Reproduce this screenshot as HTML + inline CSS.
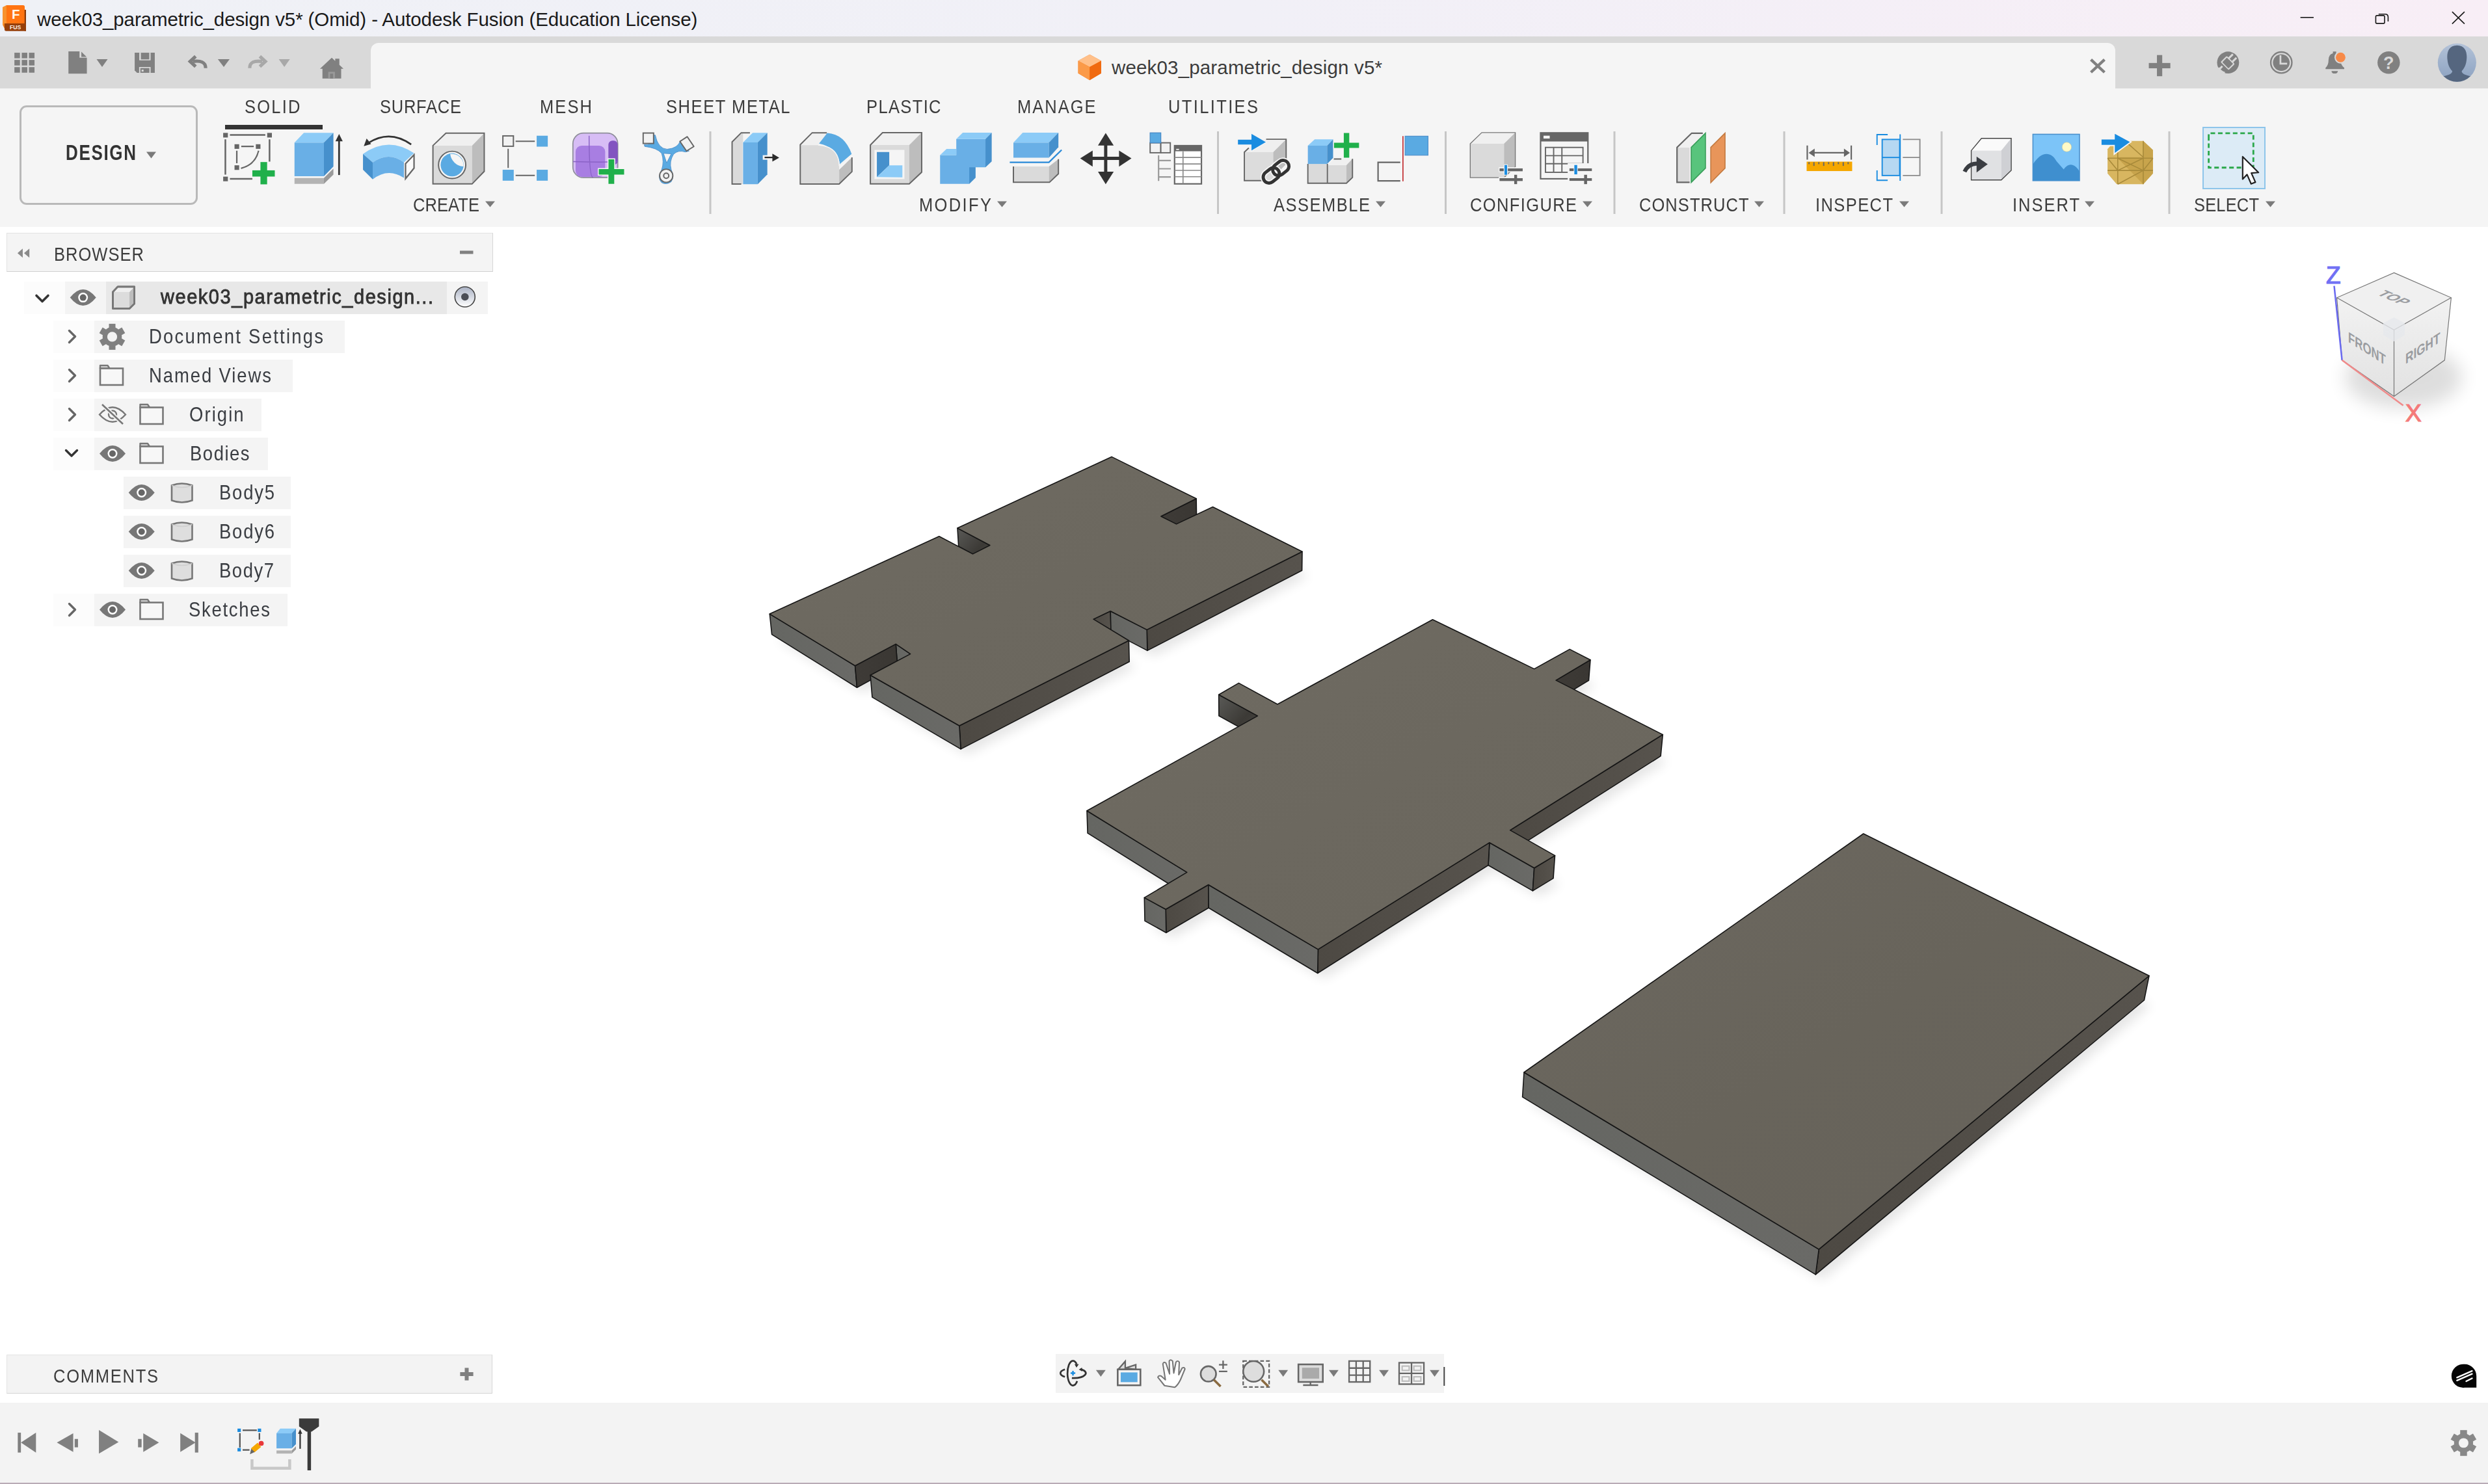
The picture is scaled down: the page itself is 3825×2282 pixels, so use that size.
<!DOCTYPE html>
<html><head><meta charset="utf-8"><title>Fusion</title>
<style>
html,body{margin:0;padding:0;width:3825px;height:2282px;overflow:hidden;background:#fff;font-family:'Liberation Sans', sans-serif;}
.a{position:absolute;}
.t{position:absolute;white-space:pre;line-height:1;font-family:'Liberation Sans', sans-serif;}
</style></head><body>
<div class="a" style="left:0;top:0;width:3825px;height:56px;background:linear-gradient(90deg,#eff1f6 0%,#f1f0f7 50%,#f8eef6 100%)"></div>
<div class="a" style="left:0;top:56px;width:3825px;height:80px;background:#d9d9d9"></div>
<div class="a" style="left:570px;top:66px;width:2682px;height:70px;background:#f5f5f5;border-radius:12px 12px 0 0"></div>
<div class="a" style="left:0;top:136px;width:3825px;height:213px;background:#f5f5f5"></div>
<div class="a" style="left:29.5px;top:162px;width:268px;height:146.5px;border:3px solid #b9b9b9;border-radius:11px"></div>
<div class="a" style="left:346px;top:192px;width:150px;height:7px;background:#333"></div>
<div class="a" style="left:3386px;top:195px;width:93px;height:92px;background:#dcebf6;border:2.5px solid #8ec5ea"></div>
<!-- browser -->
<div class="a" style="left:10px;top:358px;width:746px;height:58px;background:#f4f4f4;border:1.5px solid #e2e2e2;border-right-color:#d6d6d6;border-bottom-color:#d0d0d0"></div>
<!-- comments -->
<div class="a" style="left:10px;top:2083px;width:745px;height:58px;background:#f3f3f3;border:1.5px solid #e4e4e4;border-right-color:#d6d6d6;border-bottom-color:#d3d3d3"></div>
<!-- nav bar -->
<div class="a" style="left:1623px;top:2082px;width:597px;height:60px;background:#f3f3f3"></div>
<!-- timeline -->
<div class="a" style="left:0;top:2157px;width:3825px;height:123px;background:#f3f3f3"></div>
<div class="a" style="left:0;top:2280px;width:3825px;height:2px;background:#b9abb6"></div>
<div class="a" style="left:37px;top:433px;width:713px;height:50px;background:#fcfcfc"></div>
<div class="a" style="left:100px;top:433px;width:650px;height:50px;background:#f4f4f4"></div>
<div class="a" style="left:163px;top:433px;width:524px;height:50px;background:#e8e8e8"></div>
<div class="a" style="left:82px;top:493px;width:448px;height:50px;background:#fcfcfc"></div>
<div class="a" style="left:145px;top:493px;width:385px;height:50px;background:#f4f4f4"></div>
<div class="a" style="left:82px;top:553px;width:368px;height:50px;background:#fcfcfc"></div>
<div class="a" style="left:145px;top:553px;width:305px;height:50px;background:#f4f4f4"></div>
<div class="a" style="left:82px;top:613px;width:320px;height:50px;background:#fcfcfc"></div>
<div class="a" style="left:145px;top:613px;width:257px;height:50px;background:#f4f4f4"></div>
<div class="a" style="left:82px;top:673px;width:330px;height:50px;background:#fcfcfc"></div>
<div class="a" style="left:145px;top:673px;width:267px;height:50px;background:#f4f4f4"></div>
<div class="a" style="left:190px;top:733px;width:257px;height:50px;background:#f4f4f4"></div>
<div class="a" style="left:190px;top:793px;width:257px;height:50px;background:#f4f4f4"></div>
<div class="a" style="left:190px;top:853px;width:257px;height:50px;background:#f4f4f4"></div>
<div class="a" style="left:82px;top:913px;width:360px;height:50px;background:#fcfcfc"></div>
<div class="a" style="left:145px;top:913px;width:297px;height:50px;background:#f4f4f4"></div>
<svg width="3825" height="2282" viewBox="0 0 3825 2282" style="position:absolute;left:0;top:0">
<defs>
<linearGradient id="gt_b1" x1="0" y1="0" x2="1" y2="1"><stop offset="0" stop-color="#6f6b62"/><stop offset="0.5" stop-color="#6c685f"/><stop offset="1" stop-color="#6a665d"/></linearGradient>
<linearGradient id="gt_b2" x1="0" y1="0" x2="1" y2="1"><stop offset="0" stop-color="#6f6b62"/><stop offset="0.5" stop-color="#6c685f"/><stop offset="1" stop-color="#6a665d"/></linearGradient>
<linearGradient id="gt_b3" x1="0" y1="0" x2="1" y2="1"><stop offset="0" stop-color="#6c6860"/><stop offset="0.5" stop-color="#68645b"/><stop offset="1" stop-color="#66625b"/></linearGradient>
<linearGradient id="gl" x1="0" y1="0" x2="1" y2="0"><stop offset="0" stop-color="#656662"/><stop offset="1" stop-color="#6a6a67"/></linearGradient>
<linearGradient id="gd" x1="0" y1="0" x2="1" y2="0"><stop offset="0" stop-color="#4d4943"/><stop offset="1" stop-color="#57534d"/></linearGradient>
<linearGradient id="occ" x1="0" y1="0" x2="1" y2="1"><stop offset="0" stop-color="#5a5a57"/><stop offset="0.6" stop-color="#3c3a36"/><stop offset="1" stop-color="#4a4844"/></linearGradient>
<linearGradient id="occ2" x1="0" y1="0" x2="1" y2="0"><stop offset="0" stop-color="#3e3b37"/><stop offset="1" stop-color="#3a3733"/></linearGradient>
<filter id="sh" x="-10%" y="-10%" width="120%" height="120%"><feGaussianBlur stdDeviation="9"/></filter>
</defs>
<polygon points="1196.6,983.6 1455.7,861.1 1507.2,888.9 1533.5,875.2 1483.7,848.1 1719.7,735.6 1849.5,801.7 1795.4,829.5 1818.8,841.8 1874.7,814.7 2011.6,885.2 1773.9,1008.4 1718.0,979.1 1692.1,991.7 1746.2,1025.5 1487.1,1159.9 1350.9,1080.1 1412.0,1046.7 1389.7,1031.1 1327.5,1065.2" fill="#000" opacity="0.10" filter="url(#sh)"/>
<polygon points="1839.2,766.8 1784.9,794.0 1785.4,821.5 1839.5,793.7" fill="url(#occ2)" stroke="#161616" stroke-width="1.6" stroke-linejoin="round"/>
<polygon points="1521.9,838.5 1472.0,812.1 1473.7,840.1 1523.5,867.2" fill="url(#occ)" stroke="#161616" stroke-width="1.6" stroke-linejoin="round"/>
<polygon points="2002.0,848.2 1763.2,968.4 1763.9,1000.4 2001.6,877.2" fill="url(#gd)" stroke="#161616" stroke-width="1.6" stroke-linejoin="round"/>
<polygon points="1707.2,939.8 1681.1,952.1 1682.1,983.7 1708.0,971.1" fill="url(#gd)" stroke="#161616" stroke-width="1.6" stroke-linejoin="round"/>
<polygon points="1763.2,968.4 1707.2,939.8 1708.0,971.1 1763.9,1000.4" fill="url(#gl)" stroke="#161616" stroke-width="1.6" stroke-linejoin="round"/>
<polygon points="1314.6,1023.7 1183.3,944.1 1186.6,975.6 1317.5,1057.2" fill="url(#gl)" stroke="#161616" stroke-width="1.6" stroke-linejoin="round"/>
<polygon points="1399.6,1005.6 1377.2,990.4 1379.7,1023.1 1402.0,1038.7" fill="url(#gl)" stroke="#161616" stroke-width="1.6" stroke-linejoin="round"/>
<polygon points="1377.2,990.4 1314.6,1023.7 1317.5,1057.2 1379.7,1023.1" fill="url(#occ2)" stroke="#161616" stroke-width="1.6" stroke-linejoin="round"/>
<polygon points="1735.4,985.0 1474.9,1116.0 1477.1,1151.9 1736.2,1017.5" fill="url(#gd)" stroke="#161616" stroke-width="1.6" stroke-linejoin="round"/>
<polygon points="1474.9,1116.0 1338.1,1038.2 1340.9,1072.1 1477.1,1151.9" fill="url(#gl)" stroke="#161616" stroke-width="1.6" stroke-linejoin="round"/>
<polygon points="1183.3,944.1 1443.8,824.7 1495.5,851.9 1521.9,838.5 1472.0,812.1 1709.0,702.4 1839.2,766.8 1784.9,794.0 1808.5,805.9 1864.5,779.5 2002.0,848.2 1763.2,968.4 1707.2,939.8 1681.1,952.1 1735.4,985.0 1474.9,1116.0 1338.1,1038.2 1399.6,1005.6 1377.2,990.4 1314.6,1023.7" fill="url(#gt_b1)" stroke="#161616" stroke-width="1.6" stroke-linejoin="round"/>
<polygon points="1682.1,1289.1 1943.2,1141.6 1883.9,1108.7 1914.3,1090.6 1973.7,1123.6 2211.1,991.7 2366.6,1068.5 2420.8,1038.0 2452.5,1054.4 2399.8,1086.2 2563.1,1170.6 2329.6,1319.3 2398.0,1358.6 2366.4,1377.9 2298.0,1338.5 2035.7,1504.5 1868.1,1404.0 1802.8,1442.2 1770.0,1424.1 1835.2,1384.8" fill="#000" opacity="0.10" filter="url(#sh)"/>
<polygon points="2445.0,1014.7 2392.1,1046.1 2389.8,1078.2 2442.5,1046.4" fill="url(#occ2)" stroke="#161616" stroke-width="1.6" stroke-linejoin="round"/>
<polygon points="1933.4,1100.9 1873.7,1068.3 1873.9,1100.7 1933.2,1133.6" fill="url(#occ)" stroke="#161616" stroke-width="1.6" stroke-linejoin="round"/>
<polygon points="2556.3,1129.6 2321.7,1276.6 2319.6,1311.3 2553.1,1162.6" fill="url(#gd)" stroke="#161616" stroke-width="1.6" stroke-linejoin="round"/>
<polygon points="1824.8,1341.4 1671.0,1246.8 1672.1,1281.1 1825.2,1376.8" fill="url(#gl)" stroke="#161616" stroke-width="1.6" stroke-linejoin="round"/>
<polygon points="2358.7,1334.7 2289.9,1295.7 2288.0,1330.5 2356.4,1369.9" fill="url(#gl)" stroke="#161616" stroke-width="1.6" stroke-linejoin="round"/>
<polygon points="2390.5,1315.6 2358.7,1334.7 2356.4,1369.9 2388.0,1350.6" fill="url(#gd)" stroke="#161616" stroke-width="1.6" stroke-linejoin="round"/>
<polygon points="2289.9,1295.7 2026.4,1459.9 2025.7,1496.5 2288.0,1330.5" fill="url(#gd)" stroke="#161616" stroke-width="1.6" stroke-linejoin="round"/>
<polygon points="1857.8,1360.5 1792.2,1398.3 1792.8,1434.2 1858.1,1396.0" fill="url(#gd)" stroke="#161616" stroke-width="1.6" stroke-linejoin="round"/>
<polygon points="1792.2,1398.3 1759.3,1380.4 1760.0,1416.1 1792.8,1434.2" fill="url(#gl)" stroke="#161616" stroke-width="1.6" stroke-linejoin="round"/>
<polygon points="2026.4,1459.9 1857.8,1360.5 1858.1,1396.0 2025.7,1496.5" fill="url(#gl)" stroke="#161616" stroke-width="1.6" stroke-linejoin="round"/>
<polygon points="1671.0,1246.8 1933.4,1100.9 1873.7,1068.3 1904.4,1050.4 1964.0,1083.0 2202.5,952.7 2358.7,1028.6 2413.2,998.4 2445.0,1014.7 2392.1,1046.1 2556.3,1129.6 2321.7,1276.6 2390.5,1315.6 2358.7,1334.7 2289.9,1295.7 2026.4,1459.9 1857.8,1360.5 1792.2,1398.3 1759.3,1380.4 1824.8,1341.4" fill="url(#gt_b2)" stroke="#161616" stroke-width="1.6" stroke-linejoin="round"/>
<polygon points="2350.6,1694.9 2869.6,1326.8 3306.4,1546.0 2801.3,1967.9" fill="#000" opacity="0.10" filter="url(#sh)"/>
<polygon points="3304.0,1500.5 2796.3,1921.1 2791.3,1959.9 3296.4,1538.0" fill="url(#gd)" stroke="#161616" stroke-width="1.6" stroke-linejoin="round"/>
<polygon points="2796.3,1921.1 2343.0,1649.0 2340.6,1686.9 2791.3,1959.9" fill="url(#gl)" stroke="#161616" stroke-width="1.6" stroke-linejoin="round"/>
<polygon points="2343.0,1649.0 2864.8,1282.0 3304.0,1500.5 2796.3,1921.1" fill="url(#gt_b3)" stroke="#161616" stroke-width="1.6" stroke-linejoin="round"/>
</svg>
<svg width="3825" height="2282" viewBox="0 0 3825 2282" style="position:absolute;left:0;top:0"><path d="M4,11 L10,8 L10,36 L4,38 Z" fill="#f8922e"/><path d="M10,8 L35.5,8 Q38,8 38,10.5 L38,36 L10,36 Z" fill="#ff7412"/><path d="M37.7,15 L40,15 L40,47.7 L37.7,47.7 Z" fill="#8a3a08"/><path d="M7,36 L40,36 L40,47.7 L9.5,47.7 Q7,47.7 7,45.2 Z" fill="#963f0a"/><path d="M4,38 L7,36 L7,44 Z" fill="#f0801a"/><text x="24.3" y="29.4" font-family="Liberation Sans" font-weight="bold" font-size="20.5" fill="#fff8ec" text-anchor="middle">F</text><text x="23.7" y="44.6" font-family="Liberation Sans" font-weight="bold" font-size="8.6" fill="#fff2e6" text-anchor="middle">FUS</text><g transform="translate(3150 0) scale(0.271297)"><line x1="1425" y1="99" x2="1500" y2="99" stroke="#1a1a1a" stroke-width="6"/><rect x="1852" y="88" width="50" height="45" rx="7" fill="none" stroke="#1a1a1a" stroke-width="6"/><path d="M1868,80 L1905,80 Q1922,80 1922,97 L1922,122" fill="none" stroke="#1a1a1a" stroke-width="6"/><path d="M2285,67 L2355,135 M2355,67 L2285,135" stroke="#1a1a1a" stroke-width="6"/></g><g transform="translate(10 70) scale(0.213038)"><rect x="57" y="52" width="40" height="40" fill="#808080"/><rect x="57" y="104" width="40" height="40" fill="#808080"/><rect x="57" y="156" width="40" height="40" fill="#808080"/><rect x="110" y="52" width="40" height="40" fill="#808080"/><rect x="110" y="104" width="40" height="40" fill="#808080"/><rect x="110" y="156" width="40" height="40" fill="#808080"/><rect x="162" y="52" width="40" height="40" fill="#808080"/><rect x="162" y="104" width="40" height="40" fill="#808080"/><rect x="162" y="156" width="40" height="40" fill="#808080"/><path d="M447,42 L527,42 L527,88 L580,88 L580,203 L447,203 Z" fill="#808080"/><path d="M540,45 L578,82 L540,82 Z" fill="#808080"/><polygon points="650,98 730,98 690,155" fill="#808080" /><path d="M925,52 L1070,52 L1070,197 L942,197 L925,180 Z" fill="#808080"/><rect x="958" y="52" width="82" height="55" fill="#d9d9d9"/><rect x="970" y="52" width="60" height="48" fill="#808080"/><rect x="957" y="155" width="83" height="42" fill="#d9d9d9"/><rect x="966" y="163" width="65" height="34" fill="#808080"/><rect x="975" y="174" width="14" height="14" fill="#d9d9d9"/><path d="M1437,163 C1437,118 1400,108 1345,115" fill="none" stroke="#808080" stroke-width="24"/><path d="M1365,78 L1325,115 L1365,152" fill="none" stroke="#808080" stroke-width="24"/><polygon points="1525,98 1610,98 1568,155" fill="#808080" /><path d="M1755,163 C1755,118 1790,108 1845,115" fill="none" stroke="#a8a8a8" stroke-width="24"/><path d="M1828,78 L1868,115 L1828,152" fill="none" stroke="#a8a8a8" stroke-width="24"/><polygon points="1965,98 2045,98 2005,155" fill="#a8a8a8" /><path d="M2262,168 L2347,88 L2372,112 L2372,95 L2402,95 L2402,140 L2432,168 L2415,168 L2415,238 L2280,238 L2280,168 Z" fill="#808080"/><rect x="2322" y="190" width="48" height="48" fill="#9a9a9a"/><rect x="2335" y="203" width="22" height="35" fill="#808080"/></g><g transform="translate(1500 50) scale(0.321543)"><polygon points="545,105 600,135 600,195 545,228 490,195 490,135" fill="#f57a1e"/><polygon points="545,105 600,135 545,165 490,135" fill="#ffc08a"/><polygon points="490,135 545,165 545,228 490,195" fill="#fb9a48"/><polygon points="545,165 600,135 600,195 545,228" fill="#f06a10"/></g><g transform="translate(3150 0) scale(0.271297)"><path d="M238,338 L315,410 M315,338 L238,410" stroke="#808080" stroke-width="16"/><rect x="612" y="312" width="30" height="120" fill="#808080"/><rect x="566" y="357" width="122" height="30" fill="#808080"/></g><g transform="translate(3395 65) scale(0.168805)"><circle cx="180" cy="185" r="100" fill="#808080"/><path d="M92,232 A100,100 0 0 0 150,280" stroke="#d9d9d9" stroke-width="18" fill="none"/><path d="M88,258 L128,218" stroke="#d9d9d9" stroke-width="18"/><g transform="rotate(45 180 185)"><rect x="128" y="150" width="104" height="80" rx="10" fill="#d9d9d9"/><rect x="140" y="160" width="80" height="60" rx="6" fill="#808080"/><rect x="148" y="100" width="18" height="60" fill="#d9d9d9"/><rect x="194" y="100" width="18" height="60" fill="#d9d9d9"/></g><circle cx="665" cy="185" r="96" fill="none" stroke="#808080" stroke-width="14"/><circle cx="665" cy="185" r="76" fill="#808080"/><path d="M657,118 L657,195 L718,195" fill="none" stroke="#d9d9d9" stroke-width="16"/><path d="M1068,245 L1238,245 L1238,232 Q1205,210 1205,160 Q1205,110 1165,100 L1165,85 L1135,85 L1135,100 Q1095,110 1095,160 Q1095,210 1068,232 Z" fill="#808080"/><path d="M1122,262 L1180,262 Q1178,285 1150,285 Q1124,285 1122,262 Z" fill="#808080"/><circle cx="1205" cy="138" r="56" fill="#d9d9d9"/><circle cx="1205" cy="138" r="44" fill="#f78a48"/><circle cx="1643" cy="185" r="102" fill="#808080"/><text x="1643" y="245" font-family="Liberation Sans" font-weight="bold" font-size="160" fill="#d9d9d9" text-anchor="middle">?</text><defs><linearGradient id="avg" x1="0" y1="0" x2="0" y2="1"><stop offset="0" stop-color="#b3c2d8"/><stop offset="1" stop-color="#8ba1c0"/></linearGradient></defs><clipPath id="avc"><circle cx="2265" cy="185" r="175"/></clipPath><circle cx="2265" cy="185" r="175" fill="url(#avg)"/><path clip-path="url(#avc)" d="M2265,28 C2185,28 2170,100 2178,160 C2182,200 2195,235 2222,262 C2222,290 2180,300 2140,310 C2110,318 2095,330 2090,340 A175,175 0 0 0 2440,340 C2435,330 2420,318 2390,310 C2350,300 2308,290 2308,262 C2335,235 2348,200 2352,160 C2360,100 2345,28 2265,28 Z" fill="#55667f"/></g><rect x="1090.5" y="202" width="3" height="127" fill="#c6c6c6"/><rect x="1871.0" y="202" width="3" height="127" fill="#c6c6c6"/><rect x="2221.0" y="202" width="3" height="127" fill="#c6c6c6"/><rect x="2480.5" y="202" width="3" height="127" fill="#c6c6c6"/><rect x="2741.5" y="202" width="3" height="127" fill="#c6c6c6"/><rect x="2983.5" y="202" width="3" height="127" fill="#c6c6c6"/><rect x="3333.5" y="202" width="3" height="127" fill="#c6c6c6"/><polygon points="746,309.5 761,309.5 753.5,318.5" fill="#7a7a7a"/><polygon points="1533,309.5 1548,309.5 1540.5,318.5" fill="#7a7a7a"/><polygon points="2115,309.5 2130,309.5 2122.5,318.5" fill="#7a7a7a"/><polygon points="2433,309.5 2448,309.5 2440.5,318.5" fill="#7a7a7a"/><polygon points="2697,309.5 2712,309.5 2704.5,318.5" fill="#7a7a7a"/><polygon points="2920,309.5 2935,309.5 2927.5,318.5" fill="#7a7a7a"/><polygon points="3205,309.5 3220,309.5 3212.5,318.5" fill="#7a7a7a"/><polygon points="3483,309.5 3498,309.5 3490.5,318.5" fill="#7a7a7a"/><polygon points="225,233.5 240,233.5 232.5,243.5" fill="#7a7a7a"/><g transform="translate(340 195) scale(0.124595)"><rect x="25" y="75" width="58" height="57" fill="#666666"/><rect x="568" y="75" width="58" height="57" fill="#666666"/><rect x="25" y="615" width="58" height="57" fill="#666666"/><path d="M108,100 L545,100 M52,155 L52,590 M597,155 L597,430 M108,643 L385,643" stroke="#666666" stroke-width="20"/><rect x="165" y="215" width="57" height="57" fill="#666666"/><rect x="428" y="215" width="57" height="57" fill="#666666"/><rect x="165" y="475" width="57" height="57" fill="#666666"/><path d="M248,242 L402,242 M193,295 L193,450 M462,295 Q420,470 245,512" fill="none" stroke="#666666" stroke-width="18"/><rect x="485" y="435" width="82" height="275" fill="#20b04b"/><rect x="385" y="537" width="277" height="77" fill="#20b04b"/><polygon points="905,195 1268,195 1268,610 905,610" fill="#69afe6" /><polygon points="905,195 1020,75 1385,75 1268,195" fill="#8ccbf7" /><polygon points="1268,195 1385,75 1385,490 1268,610" fill="#4690cc" /><polygon points="905,632 1268,632 1268,705 905,705" fill="#b3b3b3" /><polygon points="1268,632 1385,515 1385,590 1268,705" fill="#9a9a9a" /><path d="M1455,165 L1455,595" stroke="#333" stroke-width="22"/><polygon points="1410,178 1455,88 1500,178" fill="#333" /><path d="M2345,218 Q2080,30 1815,200" fill="none" stroke="#333" stroke-width="22"/><polygon points="1760,238 1795,145 1850,212" fill="#333" /><path d="M1750,335 Q2060,110 2380,325 L2255,440 Q2070,300 1870,440 Z" fill="#8ccbf7"/><path d="M1870,440 Q2070,300 2255,440 L2255,630 Q2060,500 1870,648 Z" fill="#69afe6"/><polygon points="1750,335 1870,440 1870,648 1750,530" fill="#4690cc" /><polygon points="2275,455 2380,345 2380,510 2275,640" fill="#fafafa" stroke="#666666" stroke-width="18"/></g><g transform="translate(655 195) scale(0.124595)"><polygon points="85,232 568,232 568,705 85,705" fill="#dadada" /><polygon points="85,232 245,78 718,78 568,232" fill="#f0f0f0" /><polygon points="568,232 718,78 718,550 568,705" fill="#bdbdbd" /><polygon points="85,232 245,78 718,78 718,550 568,705 85,705" fill="none" stroke="#666666" stroke-width="16"/><circle cx="322" cy="470" r="168" fill="#f5f5f5" stroke="#666666" stroke-width="16"/><circle cx="322" cy="470" r="142" fill="#5aaae2"/><path d="M298,336 A142,142 0 0 1 462,490 A175,175 0 0 1 298,336 Z" fill="#f5f5f5"/><rect x="948" y="112" width="130" height="128" fill="#f2f2f2" stroke="#666666" stroke-width="16"/><rect x="1365" y="110" width="137" height="135" fill="#5aaae2"/><rect x="945" y="530" width="137" height="135" fill="#5aaae2"/><rect x="1365" y="530" width="137" height="135" fill="#5aaae2"/><path d="M1105,178 L1342,178 M1013,270 L1013,508 M1105,600 L1342,600" stroke="#666666" stroke-width="16"/><rect x="1812" y="78" width="553" height="550" rx="130" fill="#d7bdf5" stroke="#8e8e9a" stroke-width="14"/><rect x="2250" y="170" width="115" height="300" rx="50" fill="#8254c0"/><rect x="1845" y="232" width="365" height="385" rx="75" fill="#a87ee2"/><path d="M2012,110 Q2012,620 2060,625 M1815,430 Q2200,440 2365,430" fill="none" stroke="#8a62c6" stroke-width="12"/><path d="M2245,395 L2328,395 L2328,515 L2450,515 L2450,595 L2328,595 L2328,710 L2245,710 L2245,595 L2125,595 L2125,515 L2245,515 Z" fill="#20b04b" stroke="#f5f5f5" stroke-width="12"/></g><g transform="translate(975 195) scale(0.140667)"><path d="M110,195 Q250,200 340,250 Q450,255 520,195 M340,250 L355,540 M340,250 Q420,300 355,540" fill="none" stroke="#5aaae2" stroke-width="0"/><path d="M215,90 Q205,205 110,195 L115,215 Q250,230 300,290 Q330,380 300,470 Q250,560 300,610 Q350,640 405,600 Q440,540 405,470 Q380,380 430,300 Q480,250 560,275 L600,265 Q520,240 505,150 Q480,235 360,245 Q260,240 230,90 Z" fill="#5aaae2" stroke="#4a8cc8" stroke-width="6"/><polygon points="320,290 405,295 355,395" fill="#f5f5f5" stroke="#4a8cc8" stroke-width="6"/><rect x="98" y="68" width="114" height="114" fill="#f2f2f2" stroke="#666666" stroke-width="14"/><polygon points="500,160 580,108 652,215 572,265" fill="#f2f2f2" stroke="#666666" stroke-width="14" stroke-linejoin="round"/><circle cx="350" cy="535" r="72" fill="#f2f2f2" stroke="#666666" stroke-width="14"/><circle cx="350" cy="535" r="28" fill="none" stroke="#666666" stroke-width="14"/><polygon points="1070,165 1170,65 1190,65 1190,625 1070,625" fill="#dadada" /><path d="M1170,625 L1070,625 L1070,165 L1170,65 L1265,65" fill="none" stroke="#666666" stroke-width="14"/><polygon points="1190,170 1350,170 1350,628 1190,628" fill="#69afe6" stroke="#f5f5f5" stroke-width="10"/><polygon points="1190,170 1295,65 1455,65 1350,170" fill="#8ccbf7" /><polygon points="1350,170 1455,65 1455,520 1350,628" fill="#4690cc" /><polygon points="1190,170 1350,170 1350,628 1190,628" fill="#69afe6" /><rect x="1405" y="310" width="55" height="50" fill="#f5f5f5"/><path d="M1425,335 L1525,335" stroke="#2a2a2a" stroke-width="16"/><polygon points="1510,293 1585,337 1510,380" fill="#2a2a2a" /><polygon points="1815,200 1945,65 2110,65 2020,185 2010,200" fill="#f0f0f0" /><path d="M2020,183 L2110,68 Q2300,80 2378,300 L2248,418 Q2235,230 2020,183 Z" fill="#5aaae2"/><path d="M1815,200 L2010,200 Q2235,215 2240,420 L2240,625 L1815,625 Z" fill="#dadada"/><polygon points="2240,470 2380,335 2380,490 2240,625" fill="#bdbdbd" /><path d="M2010,200 Q2235,215 2240,420 L2380,300" fill="none" stroke="#f5f5f5" stroke-width="10"/><path d="M2105,65 L1945,65 L1815,195 L1815,625 L2240,625 L2380,490 L2380,335" fill="none" stroke="#666666" stroke-width="14"/></g><g transform="translate(1330 195) scale(0.124595)"><polygon points="65,225 545,225 545,705 65,705" fill="#dadada" /><polygon points="65,225 215,72 698,72 545,225" fill="#f0f0f0" /><polygon points="545,225 698,72 698,560 545,705" fill="#bdbdbd" /><polygon points="65,225 215,72 698,72 698,560 545,705 65,705" fill="none" stroke="#666666" stroke-width="16"/><rect x="115" y="285" width="370" height="360" fill="#f5f5f5"/><polygon points="145,312 298,312 298,475 145,620" fill="#4690cc" /><polygon points="145,620 298,475 460,475 460,625" fill="#8ccbf7" /><polygon points="925,350 1125,350 1125,150 1485,150 1485,500 1362,500 1362,628 1285,705 925,705" fill="#69afe6" /><polygon points="925,350 1005,272 1125,272 1125,350" fill="#8ccbf7" /><polygon points="1125,150 1205,72 1562,72 1485,150" fill="#8ccbf7" /><polygon points="1485,150 1562,72 1562,428 1485,500" fill="#4690cc" /><polygon points="1285,500 1362,500 1362,628 1285,705" fill="#4690cc" /><polygon points="1830,195 2268,195 2268,382 1830,382" fill="#69afe6" /><polygon points="1830,195 1945,72 2385,72 2268,195" fill="#8ccbf7" /><polygon points="2268,195 2385,72 2385,250 2268,382" fill="#4690cc" /><polygon points="1830,490 2268,490 2268,685 1830,685" fill="#dadada" /><polygon points="2268,490 2385,400 2385,580 2268,685" fill="#bdbdbd" /><path d="M1830,490 L1830,685 L2275,685 L2385,580 L2385,400" fill="none" stroke="#666666" stroke-width="16"/><path d="M1785,438 L2268,438 L2425,285" fill="none" stroke="#f5f5f5" stroke-width="40"/><path d="M1785,438 L2268,438 L2425,285" fill="none" stroke="#2a8ad8" stroke-width="18"/></g><g transform="translate(1650 195) scale(0.136649)"><path d="M365,200 L365,510 M210,355 L520,355" stroke="#333" stroke-width="36"/><polygon points="278,210 365,70 455,210" fill="#333" /><polygon points="278,505 365,645 455,505" fill="#333" /><polygon points="78,355 218,268 218,448" fill="#333" /><polygon points="655,355 515,268 515,448" fill="#333" /><rect x="865" y="180" width="120" height="112" fill="#f2f2f2" stroke="#666666" stroke-width="14"/><rect x="985" y="180" width="107" height="112" fill="#f2f2f2" stroke="#666666" stroke-width="14"/><rect x="865" y="68" width="120" height="112" fill="#5aaae2" stroke="#4a8cc8" stroke-width="10"/><path d="M960,320 L960,610 M960,380 L1098,380 M960,472 L1098,472 M960,565 L1098,565" stroke="#999" stroke-width="16"/><rect x="1140" y="212" width="302" height="430" fill="#fff" stroke="#666666" stroke-width="16"/><rect x="1140" y="212" width="302" height="63" fill="#666666"/><rect x="1158" y="248" width="32" height="12" fill="#fff"/><path d="M1140,345 L1442,345 M1140,418 L1442,418 M1140,490 L1442,490 M1140,562 L1442,562 M1235,275 L1235,642" stroke="#888" stroke-width="12"/><polygon points="1925,285 2250,285 2250,605 1925,605" fill="#dcdcdc" /><polygon points="1925,285 2070,140 2395,140 2250,285" fill="#efefef" /><polygon points="2250,285 2395,140 2395,420 2250,565" fill="#bdbdbd" /><path d="M2120,605 L1925,605 L1925,285 L1975,238 M2170,140 L2395,140 L2395,375" fill="none" stroke="#666666" stroke-width="14"/><path d="M1848,140 L2000,140 L2000,70 L2175,172 L2000,275 L2000,205 L1848,205 Z" fill="#1a8ce0" stroke="#f5f5f5" stroke-width="10"/><rect x="2130" y="481" width="196" height="132" rx="66" fill="none" stroke="#f5f5f5" stroke-width="62" transform="rotate(-38 2228 547)"/><rect x="2237" y="397" width="196" height="132" rx="66" fill="none" stroke="#f5f5f5" stroke-width="62" transform="rotate(-38 2335 463)"/><rect x="2130" y="481" width="196" height="132" rx="66" fill="none" stroke="#333" stroke-width="36" transform="rotate(-38 2228 547)"/><rect x="2237" y="397" width="196" height="132" rx="66" fill="none" stroke="#333" stroke-width="36" transform="rotate(-38 2335 463)"/></g><g transform="translate(2000 195) scale(0.136649)"><polygon points="78,418 298,418 298,635 78,635" fill="#dadada" /><polygon points="305,432 512,432 512,635 305,635" fill="#dadada" /><polygon points="305,432 370,362 580,362 512,432" fill="#f0f0f0" /><polygon points="512,432 580,360 580,570 512,635" fill="#bdbdbd" /><path d="M78,418 L78,635 L512,635 L580,570 L580,360 M298,418 L298,635 M370,362 L455,362" fill="none" stroke="#666666" stroke-width="14"/><polygon points="78,212 295,212 295,418 78,418" fill="#69afe6" /><polygon points="78,212 155,140 362,140 295,212" fill="#8ccbf7" /><polygon points="295,212 362,140 362,350 295,418" fill="#4690cc" /><path d="M478,65 L548,65 L548,175 L658,175 L658,242 L548,242 L548,352 L478,352 L478,242 L368,242 L368,175 L478,175 Z" fill="#20b04b" stroke="#f5f5f5" stroke-width="8"/><path d="M1118,400 L868,400 L868,608 L1118,608" fill="none" stroke="#666666" stroke-width="16"/><path d="M1148,105 L1148,612" stroke="#c0282a" stroke-width="12"/><rect x="1172" y="105" width="258" height="215" fill="#5aaae2" stroke="#4a8cc8" stroke-width="8"/><polygon points="1905,190 2285,190 2285,572 1905,572" fill="#dadada" /><polygon points="1905,190 2035,65 2412,65 2285,190" fill="#f0f0f0" /><polygon points="2285,190 2412,65 2412,450 2285,572" fill="#bdbdbd" /><polygon points="1905,190 2035,65 2412,65 2412,450 2285,572 1905,572" fill="none" stroke="#777" stroke-width="10"/><rect x="2225" y="455" width="270" height="55" fill="#f5f5f5"/><rect x="2225" y="565" width="270" height="55" fill="#f5f5f5"/><rect x="2235" y="468" width="260" height="32" fill="#666666"/><rect x="2235" y="578" width="260" height="32" fill="#666666"/><rect x="2282" y="422" width="46" height="125" rx="8" fill="#f5f5f5"/><rect x="2290" y="430" width="30" height="110" fill="#1a8ce0"/><rect x="2400" y="540" width="32" height="105" fill="#666666"/></g><g transform="translate(2350 195) scale(0.136649)"><rect x="135" y="68" width="533" height="517" fill="#f5f5f5" stroke="#666666" stroke-width="16"/><rect x="135" y="68" width="533" height="97" fill="#666666"/><rect x="168" y="100" width="70" height="32" fill="#f5f5f5"/><rect x="190" y="232" width="422" height="280" fill="none" stroke="#666666" stroke-width="14"/><path d="M282,232 L282,512 M375,232 L375,512 M190,325 L612,325 M190,415 L612,415" stroke="#666666" stroke-width="14"/><rect x="440" y="410" width="280" height="240" fill="#f5f5f5"/><rect x="460" y="468" width="252" height="30" fill="#666666"/><rect x="460" y="578" width="252" height="30" fill="#666666"/><rect x="508" y="422" width="46" height="122" rx="8" fill="#f5f5f5"/><rect x="515" y="430" width="32" height="105" fill="#1a8ce0"/><rect x="625" y="540" width="33" height="105" fill="#666666"/><polygon points="1670,232 1812,232 1812,625 1670,625" fill="#dadada" /><polygon points="1670,232 1835,72 1990,72 1830,232" fill="#f0f0f0" /><path d="M1812,625 L1670,625 L1670,232 L1835,72 L1960,72" fill="none" stroke="#666666" stroke-width="16"/><polygon points="1830,232 1990,72 1990,465 1830,625" fill="#58c47c" stroke="#3a9e5a" stroke-width="12"/><polygon points="2050,232 2210,72 2210,465 2050,628" fill="#e8955a" stroke="#c47a40" stroke-width="12"/></g><g transform="translate(2760 195) scale(0.136649)"><path d="M135,210 L135,370 M630,210 L630,370 M170,292 L595,292" stroke="#666666" stroke-width="16"/><polygon points="150,292 218,245 218,338" fill="#666666" /><polygon points="615,292 548,245 548,338" fill="#666666" /><rect x="128" y="392" width="512" height="106" fill="#f5a700"/><rect x="148" y="398" width="14" height="22" fill="#666666"/><rect x="203" y="398" width="14" height="42" fill="#666666"/><rect x="258" y="398" width="14" height="22" fill="#666666"/><rect x="313" y="398" width="14" height="42" fill="#666666"/><rect x="368" y="398" width="14" height="22" fill="#666666"/><rect x="423" y="398" width="14" height="42" fill="#666666"/><rect x="478" y="398" width="14" height="22" fill="#666666"/><rect x="533" y="398" width="14" height="42" fill="#666666"/><rect x="588" y="398" width="14" height="22" fill="#666666"/><path d="M1040,88 L920,88 L920,205 M920,490 L920,602 L1040,602 M1180,85 L1180,608" fill="none" stroke="#1a8ce0" stroke-width="14"/><rect x="978" y="142" width="197" height="406" fill="#b6d8f2" stroke="#1a8ce0" stroke-width="14"/><path d="M978,345 L1175,345" stroke="#1a8ce0" stroke-width="14"/><path d="M1210,142 L1402,142 L1402,548 L1210,548 M1210,345 L1402,345" fill="none" stroke="#8a8a8a" stroke-width="14"/><polygon points="1980,268 2318,268 2318,598 1980,598" fill="#e0e1e3" /><polygon points="1980,268 2095,130 2430,130 2318,268" fill="#fafafa" /><polygon points="2318,268 2430,130 2430,490 2318,598" fill="#cfd0d4" /><polygon points="1980,268 2095,130 2430,130 2430,490 2318,598 1980,598" fill="none" stroke="#444" stroke-width="10"/><path d="M1905,505 Q1950,410 2050,415" fill="none" stroke="#3a3d42" stroke-width="46"/><polygon points="2040,335 2165,420 2040,515" fill="#3a3d42" /></g><g transform="translate(3110 190) scale(0.156764)"><rect x="98" y="105" width="457" height="455" fill="#7cc4f8" stroke="#4a90cc" stroke-width="10"/><circle cx="430" cy="230" r="46" fill="#fffbc8" stroke="#c8c8a0" stroke-width="4"/><path d="M98,400 C170,280 270,260 330,370 L400,450 C440,390 500,380 555,470 L555,560 L98,560 Z" fill="#3f8fcf"/><polygon points="830,250 900,170 1180,170 1275,260 1275,490 1180,595 920,595 830,490" fill="#d8b660"/><polygon points="920,330 1180,330 1180,170 1275,260 1275,490 1180,595" fill="#c8a44c"/><path d="M830,340 L1275,340 M830,460 L1275,460 M930,170 L930,595 M1180,170 L1180,595 M930,340 L1180,460 M930,460 L1180,340 M930,595 L1180,460 M1000,170 L1180,330 M830,340 L930,460 M1275,340 L1180,460" fill="none" stroke="#a88a3a" stroke-width="10"/><path d="M765,150 L895,150 L895,90 L1060,180 L895,300 L895,215 L765,215 Z" fill="#1a8ce0" stroke="#f5f5f5" stroke-width="12"/><path d="M1822,150 L1822,95 L2260,95 L2260,432 L1822,432 L1822,150" fill="none" stroke="#2aa84a" stroke-width="18" stroke-dasharray="45 28"/><polygon points="2155,325 2310,480 2240,485 2280,575 2238,592 2198,500 2155,545" fill="#fff" stroke="#222" stroke-width="14" stroke-linejoin="round"/></g><g transform="translate(10 355) scale(0.100482)"><polygon points="168,340 248,270 248,410" fill="#8a8a8a"/><polygon points="268,340 350,270 350,410" fill="#8a8a8a"/></g><rect x="707" y="385.5" width="20.5" height="5" fill="#808080"/><defs><linearGradient id="rad" x1="0" y1="0" x2="0" y2="1"><stop offset="0" stop-color="#aab2c4"/><stop offset="1" stop-color="#ffffff"/></linearGradient></defs><circle cx="714.8" cy="456.5" r="15.5" fill="url(#rad)" stroke="#444" stroke-width="1.6"/><circle cx="714.8" cy="456.5" r="5.8" fill="#4a4d55"/><path d="M56,454.5 L65,463.5 L74,454.5" fill="none" stroke="#333" stroke-width="3.6" stroke-linecap="round" stroke-linejoin="round"/><path d="M106.5,508.5 L115.5,517.5 L106.5,526.5" fill="none" stroke="#666" stroke-width="3.4" stroke-linecap="round" stroke-linejoin="round"/><path d="M106.5,568.5 L115.5,577.5 L106.5,586.5" fill="none" stroke="#666" stroke-width="3.4" stroke-linecap="round" stroke-linejoin="round"/><path d="M106.5,628.5 L115.5,637.5 L106.5,646.5" fill="none" stroke="#666" stroke-width="3.4" stroke-linecap="round" stroke-linejoin="round"/><path d="M106.5,928.5 L115.5,937.5 L106.5,946.5" fill="none" stroke="#666" stroke-width="3.4" stroke-linecap="round" stroke-linejoin="round"/><path d="M101.5,692.5 L110,701 L118.5,692.5" fill="none" stroke="#333" stroke-width="3.4" stroke-linecap="round" stroke-linejoin="round"/><path d="M107.7,457.6 Q127.7,432.6 147.7,457.6 Q127.7,482.6 107.7,457.6 Z" fill="#777777"/><circle cx="127.7" cy="457.6" r="7.5" fill="#fff"/><circle cx="127.7" cy="457.6" r="5" fill="#666"/><path d="M153,697.5 Q173,672.5 193,697.5 Q173,722.5 153,697.5 Z" fill="#777777"/><circle cx="173" cy="697.5" r="7.5" fill="#fff"/><circle cx="173" cy="697.5" r="5" fill="#666"/><path d="M197.7,757.5 Q217.7,732.5 237.7,757.5 Q217.7,782.5 197.7,757.5 Z" fill="#777777"/><circle cx="217.7" cy="757.5" r="7.5" fill="#fff"/><circle cx="217.7" cy="757.5" r="5" fill="#666"/><path d="M197.7,817.5 Q217.7,792.5 237.7,817.5 Q217.7,842.5 197.7,817.5 Z" fill="#777777"/><circle cx="217.7" cy="817.5" r="7.5" fill="#fff"/><circle cx="217.7" cy="817.5" r="5" fill="#666"/><path d="M197.7,877.5 Q217.7,852.5 237.7,877.5 Q217.7,902.5 197.7,877.5 Z" fill="#777777"/><circle cx="217.7" cy="877.5" r="7.5" fill="#fff"/><circle cx="217.7" cy="877.5" r="5" fill="#666"/><path d="M153,937.5 Q173,912.5 193,937.5 Q173,962.5 153,937.5 Z" fill="#777777"/><circle cx="173" cy="937.5" r="7.5" fill="#fff"/><circle cx="173" cy="937.5" r="5" fill="#666"/><path d="M153,637.5 Q173,615 193,637.5 Q173,660 153,637.5 Z" fill="none" stroke="#777777" stroke-width="2.4"/><circle cx="173" cy="637.5" r="6" fill="none" stroke="#777777" stroke-width="2.4"/><path d="M157,622 L189,652" stroke="#f3f3f3" stroke-width="6"/><path d="M157,622 L189,652" stroke="#777777" stroke-width="2.6"/><polygon points="173.5,449 181,441 206.5,441 206.5,467 199,474.5 173.5,474.5" fill="#dcdcdc" stroke="#777777" stroke-width="2.8" stroke-linejoin="round"/><polygon points="199,449 206.5,441 206.5,467 199,474.5" fill="#bdbdbd"/><polygon points="173.5,449 181,441 206.5,441 199,449" fill="#efefef"/><polygon points="173.5,449 181,441 206.5,441 206.5,467 199,474.5 173.5,474.5" fill="none" stroke="#777777" stroke-width="2.8" stroke-linejoin="round"/><rect x="167.5" y="497.9" width="10" height="40" fill="#808080" transform="rotate(0 172.5 517.9)"/><rect x="167.5" y="497.9" width="10" height="40" fill="#808080" transform="rotate(60 172.5 517.9)"/><rect x="167.5" y="497.9" width="10" height="40" fill="#808080" transform="rotate(120 172.5 517.9)"/><circle cx="172.5" cy="517.9" r="14.8" fill="#808080"/><circle cx="172.5" cy="517.9" r="7.6" fill="#f3f3f3"/><path d="M154.0,566.5 L154.0,562.0 L165.5,562.0 L168.5,566.5 Z" fill="#dddddd" stroke="#777777" stroke-width="2.4" stroke-linejoin="round"/><rect x="154.0" y="566.5" width="35" height="25.5" fill="#f7f7f7" stroke="#777777" stroke-width="2.6"/><path d="M215.5,626.5 L215.5,622.0 L227,622.0 L230,626.5 Z" fill="#dddddd" stroke="#777777" stroke-width="2.4" stroke-linejoin="round"/><rect x="215.5" y="626.5" width="35" height="25.5" fill="#f7f7f7" stroke="#777777" stroke-width="2.6"/><path d="M215.5,686.5 L215.5,682.0 L227,682.0 L230,686.5 Z" fill="#dddddd" stroke="#777777" stroke-width="2.4" stroke-linejoin="round"/><rect x="215.5" y="686.5" width="35" height="25.5" fill="#f7f7f7" stroke="#777777" stroke-width="2.6"/><path d="M215.5,926.5 L215.5,922.0 L227,922.0 L230,926.5 Z" fill="#dddddd" stroke="#777777" stroke-width="2.4" stroke-linejoin="round"/><rect x="215.5" y="926.5" width="35" height="25.5" fill="#f7f7f7" stroke="#777777" stroke-width="2.6"/><path d="M264.0,746.5 Q279.5,740.5 295.5,746.5 L295.5,769.5 Q279.5,775.5 264.0,769.5 Z" fill="#dedede" stroke="#777777" stroke-width="2.6"/><path d="M264.0,746.5 Q279.5,752.5 295.5,746.5" fill="none" stroke="#cfcfcf" stroke-width="1.5"/><path d="M264.0,806.5 Q279.5,800.5 295.5,806.5 L295.5,829.5 Q279.5,835.5 264.0,829.5 Z" fill="#dedede" stroke="#777777" stroke-width="2.6"/><path d="M264.0,806.5 Q279.5,812.5 295.5,806.5" fill="none" stroke="#cfcfcf" stroke-width="1.5"/><path d="M264.0,866.5 Q279.5,860.5 295.5,866.5 L295.5,889.5 Q279.5,895.5 264.0,889.5 Z" fill="#dedede" stroke="#777777" stroke-width="2.6"/><path d="M264.0,866.5 Q279.5,872.5 295.5,866.5" fill="none" stroke="#cfcfcf" stroke-width="1.5"/><defs><filter id="vcs" x="-50%" y="-50%" width="200%" height="200%"><feGaussianBlur stdDeviation="14"/></filter><linearGradient id="vcf" x1="0" y1="0" x2="0" y2="1"><stop offset="0" stop-color="#f2f2f2"/><stop offset="1" stop-color="#e2e2e2"/></linearGradient></defs><ellipse cx="3695" cy="580" rx="90" ry="48" fill="#000" opacity="0.13" filter="url(#vcs)"/><polygon points="3680.5,419.4 3768.4,457.8 3680.5,507.3 3592.6,457.8" fill="#f0f0f0"/><polygon points="3592.6,457.8 3680.5,507.3 3680.5,609.4 3600.6,553.8" fill="url(#vcf)"/><polygon points="3680.5,507.3 3768.4,457.8 3758.3,553.8 3680.5,609.4" fill="url(#vcf)"/><polygon points="3680.5,419.4 3768.4,457.8 3758.3,553.8 3680.5,609.4 3600.6,553.8 3592.6,457.8" fill="none" stroke="#777" stroke-width="1.2"/><path d="M3592.6,457.8 L3680.5,507.3 L3768.4,457.8 M3680.5,507.3 L3680.5,609.4" fill="none" stroke="#777" stroke-width="1.2"/><polygon points="3680.5,488 3697,497 3697,515 3680.5,525 3664,515 3664,497" fill="#e6e8ec" opacity="0.8"/><text font-family="Liberation Sans" font-weight="bold" font-size="20" fill="#9a9ca0" transform="matrix(1.0,0.42,-1.05,0.48,3653,452.5)">TOP</text><text font-family="Liberation Sans" font-weight="bold" font-size="20" fill="#9a9ca0" transform="matrix(0.84,0.53,0,1.12,3610,525.5)">FRONT</text><text font-family="Liberation Sans" font-weight="bold" font-size="20" fill="#9a9ca0" transform="matrix(0.86,-0.55,0,1.1,3698,560)">RIGHT</text><path d="M3600.6,553.8 L3588.5,439.6" stroke="#6a6af0" stroke-width="2.5"/><path d="M3600.6,553.8 L3694.6,623.6" stroke="#f08a8a" stroke-width="2.5"/><text x="3576" y="435.6" font-family="Liberation Sans" font-size="37" fill="#7070f4" stroke="#7070f4" stroke-width="1.2">Z</text><text x="3698" y="647.8" font-family="Liberation Sans" font-size="37" fill="#f47a7a" stroke="#f47a7a" stroke-width="1.2">X</text><rect x="714.5" y="2103.4" width="6" height="19.3" fill="#808080"/><rect x="707.4" y="2110" width="20.2" height="6" fill="#808080"/><g transform="translate(1600 2060) scale(0.257235)"><path d="M215,146.5 A32.8,73.8 0 1 0 217.7,247.7 M144.4,177.9 A75,29.3 0 0 0 144.4,222.7 M186.1,229.5 A75,29.3 0 0 0 238,176.5" fill="none" stroke="#333" stroke-width="10.5"/><polygon points="202,146.4 227.7,146.4 213.6,167.5" fill="#333" /><polygon points="227.7,179.2 246.4,167.5 248.8,190.9" fill="#333" /><path d="M192.6,186.3 L192.6,214.3 M178.6,200.3 L206.6,200.3" stroke="#1a8ce0" stroke-width="9.4"/><polygon points="330,182 388,182 359,222" fill="#7a7a7a" /><polygon points="1420,182 1478,182 1449,222" fill="#7a7a7a" /><polygon points="1722,182 1780,182 1751,222" fill="#7a7a7a" /><polygon points="2022,182 2080,182 2051,222" fill="#7a7a7a" /><polygon points="2325,182 2383,182 2354,222" fill="#7a7a7a" /><polygon points="463,178 505,130 505,178" fill="#ddd" stroke="#666" stroke-width="9"/><polygon points="505,170 568,150 568,178" fill="#ddd" stroke="#666" stroke-width="9"/><rect x="460" y="178" width="136" height="95" fill="#f3f3f3" stroke="#666" stroke-width="10"/><rect x="478" y="196" width="100" height="58" fill="#5aaae2"/><path d="M740,275 L700,225 Q705,212 720,218 L745,240 L730,145 Q735,130 748,140 L770,205 L768,128 Q775,115 788,128 L795,200 L808,135 Q818,122 828,135 L825,210 L845,170 Q858,162 862,175 L835,240 Q818,275 800,285 Z" fill="#fff" stroke="#777" stroke-width="8" stroke-linejoin="round"/><circle cx="1002" cy="205" r="46" fill="#ddd" stroke="#666" stroke-width="10"/><path d="M1035,240 L1075,280" stroke="#8a6a40" stroke-width="14"/><path d="M1065,150 L1115,150 M1090,125 L1090,175 M1065,190 L1115,190" stroke="#666" stroke-width="9"/><rect x="1210" y="128" width="155" height="155" fill="none" stroke="#666" stroke-width="9" stroke-dasharray="22 12"/><circle cx="1272" cy="190" r="62" fill="#ddd" stroke="#666" stroke-width="10"/><path d="M1320,240 L1360,280" stroke="#8a6a40" stroke-width="14"/><rect x="1540" y="148" width="146" height="105" fill="#ddd" stroke="#666" stroke-width="10"/><rect x="1562" y="168" width="102" height="65" fill="#aaa"/><path d="M1612,253 L1612,268 M1568,272 L1658,272" stroke="#666" stroke-width="9"/><rect x="1843" y="128" width="125" height="125" fill="none" stroke="#666" stroke-width="9"/><path d="M1885,128 L1885,253 M1927,128 L1927,253 M1843,170 L1968,170 M1843,212 L1968,212" stroke="#666" stroke-width="9"/><rect x="2142" y="138" width="148" height="128" fill="none" stroke="#666" stroke-width="9"/><path d="M2216,138 L2216,266 M2142,202 L2290,202" stroke="#666" stroke-width="9"/><rect x="2160" y="158" width="42" height="26" fill="none" stroke="#bbb" stroke-width="8"/><rect x="2230" y="158" width="42" height="26" fill="none" stroke="#bbb" stroke-width="8"/><rect x="2160" y="222" width="42" height="26" fill="none" stroke="#bbb" stroke-width="8"/><rect x="2230" y="222" width="42" height="26" fill="none" stroke="#bbb" stroke-width="8"/></g><rect x="2219.3" y="2102" width="2" height="29" fill="#444"/><g transform="translate(0 2060) scale(0.321543)"><rect x="85" y="445" width="15" height="95" fill="#808080"/><polygon points="100,492 172,445 172,540" fill="#808080" /><polygon points="272,492 350,448 350,537" fill="#808080" /><rect x="357" y="475" width="16" height="40" fill="#808080"/><polygon points="473,432 567,490 473,545" fill="#808080" /><rect x="660" y="475" width="17" height="40" fill="#808080"/><polygon points="685,448 760,492 685,537" fill="#808080" /><polygon points="862,447 935,492 862,537" fill="#808080" /><rect x="932" y="445" width="16" height="95" fill="#808080"/><path d="M1160,433.6 L1228,433.6 M1240.3,447 L1240.3,478 M1147,447 L1147,516 M1160,527.3 L1193,527.3" fill="none" stroke="#555" stroke-width="7"/><rect x="1135.5" y="425.5" width="16" height="16" fill="#1a8ce0"/><rect x="1232.5" y="425.5" width="16" height="16" fill="#1a8ce0"/><rect x="1135.5" y="518.5" width="16" height="16" fill="#1a8ce0"/><path d="M1206,532 L1247,497" stroke="#f5f5f5" stroke-width="34"/><path d="M1208,530 L1240,503" stroke="#f5a700" stroke-width="26"/><circle cx="1249" cy="496" r="12" fill="#e8383a"/><polygon points="1195,548 1201,522 1218,537" fill="#666" /><polygon points="1322,448 1395,448 1395,520 1322,520" fill="#69afe6" /><polygon points="1322,448 1340,425 1415,425 1395,448" fill="#8ccbf7" /><polygon points="1395,448 1415,425 1415,500 1395,520" fill="#4690cc" /><polygon points="1322,530 1395,530 1395,545 1322,545" fill="#b3b3b3" /><polygon points="1395,530 1415,510 1415,525 1395,545" fill="#9a9a9a" /><path d="M1435,440 L1435,522" stroke="#333" stroke-width="7"/><polygon points="1425,450 1435,428 1445,450" fill="#333" /><path d="M1430,377 L1525,377 L1525,415 L1490,440 L1487,440 L1487,625 L1470,625 L1470,440 L1465,440 L1430,415 Z" fill="#3a3a3a"/><path d="M1205,572 L1205,615 L1385,615 L1385,572" fill="none" stroke="#c8c8c8" stroke-width="14"/></g><g transform="translate(3600 2060) scale(0.149611)"><path d="M1265,253 A121,121 0 1 0 1265,493 L1385,493 L1385,373 A121,121 0 0 0 1265,253 Z" fill="#050505"/><path d="M1185,390 L1340,322 M1185,420 L1340,352 M1280,428 L1340,398" stroke="#fff" stroke-width="16" stroke-linecap="round"/><rect x="1218" y="930" width="70" height="265" fill="#888" transform="rotate(0 1253 1062)"/><rect x="1218" y="930" width="70" height="265" fill="#888" transform="rotate(60 1253 1062)"/><rect x="1218" y="930" width="70" height="265" fill="#888" transform="rotate(120 1253 1062)"/><circle cx="1253" cy="1062" r="98" fill="#888"/><circle cx="1253" cy="1062" r="50" fill="#f3f3f3"/></g></svg>
<div class="t" style="left:57.0px;top:15.0px;font-size:29.5px;color:#1a1a1a;font-weight:normal;letter-spacing:-0.11px">week03_parametric_design v5* (Omid) - Autodesk Fusion (Education License)</div><div class="t" style="left:1709.0px;top:89.0px;font-size:29.5px;color:#3c3c3c;font-weight:normal;letter-spacing:0.16px">week03_parametric_design v5*</div><div class="t" style="left:376.0px;top:148.6px;font-size:30px;color:#3c3c3c;font-weight:normal;letter-spacing:2.64px;transform:scaleX(0.85);transform-origin:0 0">SOLID</div><div class="t" style="left:584.0px;top:148.6px;font-size:30px;color:#3c3c3c;font-weight:normal;letter-spacing:0.89px;transform:scaleX(0.85);transform-origin:0 0">SURFACE</div><div class="t" style="left:830.0px;top:148.6px;font-size:30px;color:#3c3c3c;font-weight:normal;letter-spacing:2.48px;transform:scaleX(0.85);transform-origin:0 0">MESH</div><div class="t" style="left:1023.5px;top:148.6px;font-size:30px;color:#3c3c3c;font-weight:normal;letter-spacing:1.85px;transform:scaleX(0.85);transform-origin:0 0">SHEET METAL</div><div class="t" style="left:1332.0px;top:148.6px;font-size:30px;color:#3c3c3c;font-weight:normal;letter-spacing:1.61px;transform:scaleX(0.85);transform-origin:0 0">PLASTIC</div><div class="t" style="left:1564.0px;top:148.6px;font-size:30px;color:#3c3c3c;font-weight:normal;letter-spacing:2.35px;transform:scaleX(0.85);transform-origin:0 0">MANAGE</div><div class="t" style="left:1796.0px;top:148.6px;font-size:30px;color:#3c3c3c;font-weight:normal;letter-spacing:2.79px;transform:scaleX(0.85);transform-origin:0 0">UTILITIES</div><div class="t" style="left:635.0px;top:299.6px;font-size:30px;color:#3c3c3c;font-weight:normal;letter-spacing:0.11px;transform:scaleX(0.85);transform-origin:0 0">CREATE</div><div class="t" style="left:1413.0px;top:299.6px;font-size:30px;color:#3c3c3c;font-weight:normal;letter-spacing:2.78px;transform:scaleX(0.85);transform-origin:0 0">MODIFY</div><div class="t" style="left:1957.7px;top:299.6px;font-size:30px;color:#3c3c3c;font-weight:normal;letter-spacing:1.77px;transform:scaleX(0.85);transform-origin:0 0">ASSEMBLE</div><div class="t" style="left:2260.0px;top:299.6px;font-size:30px;color:#3c3c3c;font-weight:normal;letter-spacing:1.62px;transform:scaleX(0.85);transform-origin:0 0">CONFIGURE</div><div class="t" style="left:2520.0px;top:299.6px;font-size:30px;color:#3c3c3c;font-weight:normal;letter-spacing:1.24px;transform:scaleX(0.85);transform-origin:0 0">CONSTRUCT</div><div class="t" style="left:2791.0px;top:299.6px;font-size:30px;color:#3c3c3c;font-weight:normal;letter-spacing:1.66px;transform:scaleX(0.85);transform-origin:0 0">INSPECT</div><div class="t" style="left:3094.0px;top:299.6px;font-size:30px;color:#3c3c3c;font-weight:normal;letter-spacing:2.34px;transform:scaleX(0.85);transform-origin:0 0">INSERT</div><div class="t" style="left:3373.0px;top:299.6px;font-size:30px;color:#3c3c3c;font-weight:normal;letter-spacing:0.19px;transform:scaleX(0.85);transform-origin:0 0">SELECT</div><div class="t" style="left:101.0px;top:218.5px;font-size:32.5px;color:#333333;font-weight:bold;letter-spacing:2.08px;transform:scaleX(0.8);transform-origin:0 0">DESIGN</div><div class="t" style="left:82.5px;top:375.6px;font-size:30px;color:#3c3c3c;font-weight:normal;letter-spacing:1.22px;transform:scaleX(0.85);transform-origin:0 0">BROWSER</div><div class="t" style="left:82.0px;top:2100.6px;font-size:30px;color:#3c3c3c;font-weight:normal;letter-spacing:2.06px;transform:scaleX(0.85);transform-origin:0 0">COMMENTS</div><div class="t" style="left:247.0px;top:441.3px;font-size:31.5px;color:#333333;font-weight:normal;letter-spacing:1.69px;transform:scaleX(0.92);transform-origin:0 0;-webkit-text-stroke:0.9px #333">week03_parametric_design...</div><div class="t" style="left:229.0px;top:502.2px;font-size:30.5px;color:#3a3d42;font-weight:normal;letter-spacing:2.51px;transform:scaleX(0.9);transform-origin:0 0">Document Settings</div><div class="t" style="left:229.0px;top:562.2px;font-size:30.5px;color:#3a3d42;font-weight:normal;letter-spacing:2.13px;transform:scaleX(0.9);transform-origin:0 0">Named Views</div><div class="t" style="left:291.4px;top:622.2px;font-size:30.5px;color:#3a3d42;font-weight:normal;letter-spacing:2.31px;transform:scaleX(0.9);transform-origin:0 0">Origin</div><div class="t" style="left:292.4px;top:682.2px;font-size:30.5px;color:#3a3d42;font-weight:normal;letter-spacing:1.70px;transform:scaleX(0.9);transform-origin:0 0">Bodies</div><div class="t" style="left:337.0px;top:742.2px;font-size:30.5px;color:#3a3d42;font-weight:normal;letter-spacing:1.99px;transform:scaleX(0.9);transform-origin:0 0">Body5</div><div class="t" style="left:337.0px;top:802.2px;font-size:30.5px;color:#3a3d42;font-weight:normal;letter-spacing:1.99px;transform:scaleX(0.9);transform-origin:0 0">Body6</div><div class="t" style="left:337.0px;top:862.2px;font-size:30.5px;color:#3a3d42;font-weight:normal;letter-spacing:1.71px;transform:scaleX(0.9);transform-origin:0 0">Body7</div><div class="t" style="left:290.0px;top:922.2px;font-size:30.5px;color:#3a3d42;font-weight:normal;letter-spacing:1.92px;transform:scaleX(0.9);transform-origin:0 0">Sketches</div>
</body></html>
